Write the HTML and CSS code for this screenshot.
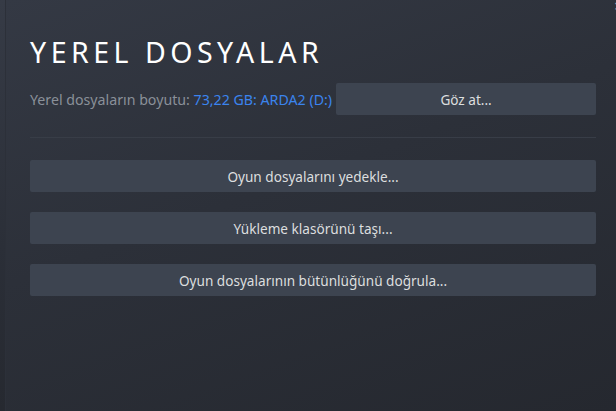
FILE: index.html
```html
<!DOCTYPE html>
<html lang="tr">
<head>
<meta charset="utf-8">
<link rel="stylesheet" href="styles.css">
</head>
<body>
<div class="frame">
  <div class="edge"></div>
  <div class="dialog">
    <span class="close">×</span>
    <h1 class="title">YEREL DOSYALAR</h1>
    <div class="size-row">
      <div class="size-label">Yerel dosyaların boyutu: <span class="size-value">73,22 GB: ARDA2 (D:)</span></div>
      <button class="btn btn-browse">Göz at...</button>
    </div>
    <div class="divider"></div>
    <div class="actions">
      <button class="btn">Oyun dosyalarını yedekle...</button>
      <button class="btn">Yükleme klasörünü taşı...</button>
      <button class="btn">Oyun dosyalarının bütünlüğünü doğrula...</button>
    </div>
  </div>
</div>
</body>
</html>
```
FILE: styles.css
```css
html, body {
  margin: 0;
  padding: 0;
  width: 616px;
  height: 411px;
  overflow: hidden;
}
body {
  font-family: "Noto Sans", "Open Sans", sans-serif;
  background: #2a2e36;
}
.frame {
  display: flex;
  width: 616px;
  height: 411px;
}
.edge {
  width: 5px;
  flex: none;
  background: linear-gradient(to bottom, #363b46 0%, #2b2f38 60%, #262930 100%);
  border-right: 1px solid #2c3039;
}
.dialog {
  position: relative;
  flex: 1;
  padding: 33px 20px 0 24px;
  background: linear-gradient(160deg, #343944 0%, #2c3039 45%, #25282f 100%);
}
.close {
  position: absolute;
  top: -4px;
  right: -7px;
  color: #9aa0a8;
  font-size: 16px;
  line-height: 20px;
}
.title {
  margin: 0;
  font-size: 28.5px;
  line-height: 38px;
  font-weight: 400;
  letter-spacing: 4.5px;
  color: #ffffff;
}
.size-row {
  display: flex;
  align-items: center;
  gap: 4px;
  margin-top: 12px;
}
.size-label {
  flex: 1;
  font-size: 14.2px;
  color: #8a9099;
  white-space: nowrap;
}
.size-value {
  color: #3b84ee;
}
.btn {
  display: block;
  height: 32px;
  padding: 0;
  border: none;
  border-radius: 2px;
  background: #3d4450;
  color: #dcdedf;
  font-family: "Noto Sans", "Open Sans", sans-serif;
  font-size: 13.6px;
  text-align: center;
}
.btn-browse {
  width: 260px;
  flex: none;
}
.divider {
  height: 1px;
  margin-top: 22px;
  background: #383d47;
}
.actions {
  display: flex;
  flex-direction: column;
  gap: 20px;
  margin-top: 22px;
}
.actions .btn {
  width: 100%;
}
```
